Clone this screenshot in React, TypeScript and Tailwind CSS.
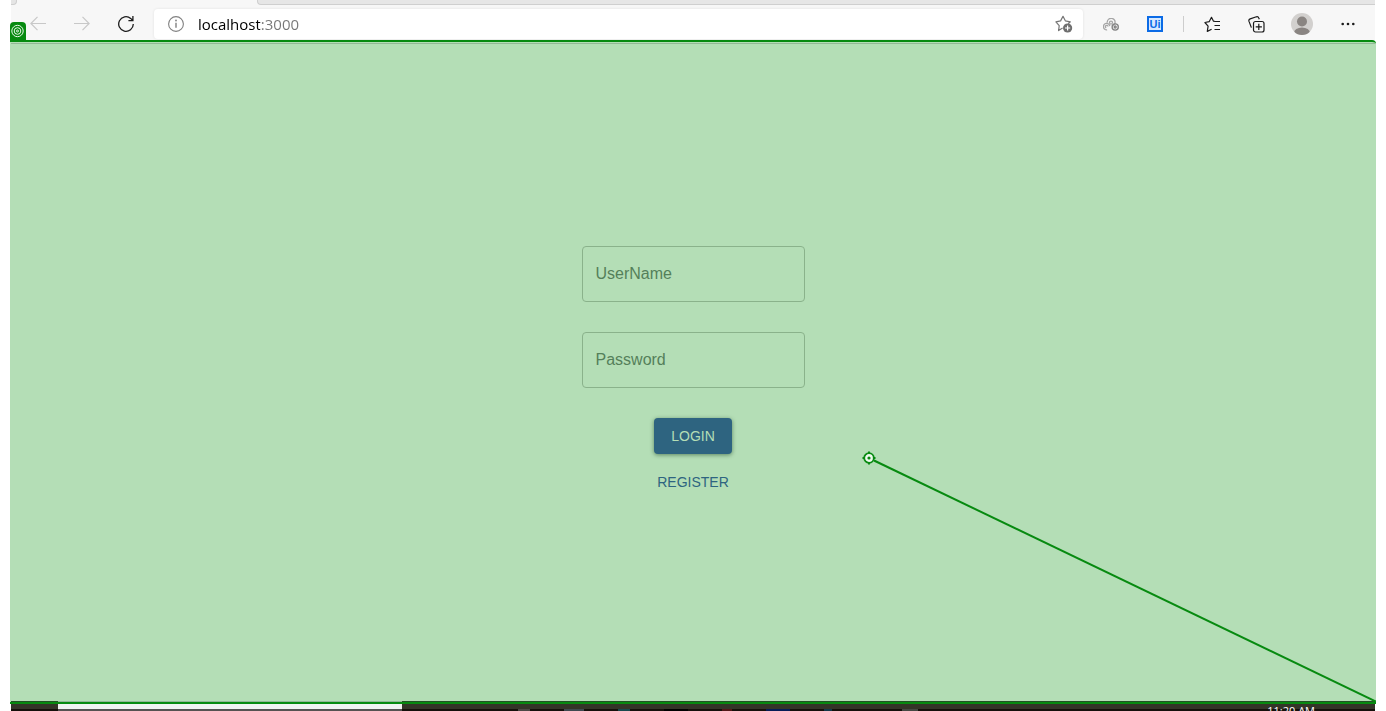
import React, { useState } from "react";

const iconButton = "flex h-7 w-11 shrink-0 items-center justify-center";

function ToolbarButton({ label, children, className = iconButton }: { label: string; children: React.ReactNode; className?: string }) {
  return (
    <button type="button" aria-label={label} className={className}>
      {children}
    </button>
  );
}

function TabStrip() {
  return (
    <div className="flex h-[5px] shrink-0 bg-[#f7f7f7]">
      <div className="w-1.5 rounded-br border-r border-b border-[#cfcfcf] bg-[#e5e5e5]" />
      <div className="w-60" />
      <div className="flex-1 rounded-bl border-b border-l border-[#cfcfcf] bg-[#e6e6e6]" />
    </div>
  );
}

function Toolbar() {
  const [url, setUrl] = useState("localhost:3000");
  return (
    <div className="flex h-[35px] items-center bg-[#f7f7f7] px-[5px] pt-[3px]">
      <ToolbarButton label="Back">
        <svg width="16" height="16" viewBox="0 0 16 16" fill="none" stroke="#c8c8c8" strokeWidth="1.2">
          <path d="M16 7.5H.9M7.5.9L.9 7.5l6.6 6.6" />
        </svg>
      </ToolbarButton>
      <ToolbarButton label="Forward">
        <svg width="16" height="16" viewBox="0 0 16 16" fill="none" stroke="#c8c8c8" strokeWidth="1.2">
          <path d="M0 7.5h15.1M8.5.9l6.6 6.6-6.6 6.6" />
        </svg>
      </ToolbarButton>
      <ToolbarButton label="Refresh">
        <svg width="16" height="16" viewBox="0 0 16 16" fill="none" stroke="#1c1c1c" strokeWidth="1.3">
          <path d="M15.3 8a7.3 7.3 0 1 1-2.6-5.6L15 4.7M14.9 0v4.7h-4.5" />
        </svg>
      </ToolbarButton>
      <div className="ml-1.5 flex h-[30px] flex-1 items-center rounded bg-white px-3.5 shadow-[0_0_3px_rgba(0,0,0,0.09)]">
        <ToolbarButton label="View site information" className="shrink-0">
          <svg width="16" height="16" viewBox="0 0 16 16" fill="none" stroke="#808080">
            <circle cx="8" cy="8" r="7.4" strokeWidth="1.1" />
            <path d="M8 6.7v5" strokeWidth="1.4" />
            <circle cx="8" cy="4.5" r=".9" fill="#808080" stroke="none" />
          </svg>
        </ToolbarButton>
        <input
          aria-label="Address"
          value={url}
          onChange={(e) => setUrl(e.target.value)}
          className="ml-3.5 h-6 min-w-0 flex-1 bg-[linear-gradient(90deg,#000_62px,#767676_62px)] bg-clip-text font-['Open_Sans',sans-serif] text-[15px] leading-6 text-transparent caret-black outline-none"
        />
        <ToolbarButton label="Add this page to favorites" className="-mr-1 shrink-0">
          <svg width="18" height="18" viewBox="0 0 18 18" fill="none" stroke="#757575" strokeWidth="1.2">
            <path d="M7.6 13.1L3.6 15.6l.6-4.9L.9 6.9l4.7-1L8 1.3l2.3 4.5 5 1-2.1 2" strokeLinejoin="round" />
            <circle cx="12.6" cy="13" r="4.6" fill="#6e6e6e" stroke="none" />
            <path d="M12.6 10.4v5.2M10 13h5.2" stroke="#fff" />
          </svg>
        </ToolbarButton>
      </div>
      <ToolbarButton label="Extension" className="ml-1.5 flex h-7 w-11 shrink-0 items-center justify-center">
        <svg width="16" height="13" viewBox="0 0 16 13" fill="none" stroke="#a6a6a6" strokeWidth="1.3">
          <path d="M4.1 11.8A3.2 3.2 0 1 1 6.8 8.2M3.2 9.8a1.3 1.3 0 1 1 1.8-1.2M4.3 4.6a3.9 3.9 0 1 1 7.5 1L9.2 8.4" />
          <circle cx="8" cy="4.6" r="1.5" />
          <circle cx="12.2" cy="9" r="3.1" stroke="#828282" />
          <circle cx="12.2" cy="9" r="1" stroke="#828282" />
        </svg>
      </ToolbarButton>
      <ToolbarButton label="UiPath">
        <span className="flex size-4 items-end justify-center border-2 border-[#0b6be6] bg-[#d6e9ff] font-['Liberation_Sans',sans-serif] text-[11px] leading-[11px] font-bold text-[#0b6be6]">
          Ui
        </span>
      </ToolbarButton>
      <div className="mx-1.5 h-4 w-px bg-[#cdcdcd]" />
      <ToolbarButton label="Favorites">
        <svg width="17" height="17" viewBox="0 0 17 17" fill="none" stroke="#1b1b1b" strokeWidth="1.2">
          <path d="M11.2 5.5L9.5 5.2 7.5 1.3 5.3 5.6l-4.4.9 3.2 3.7-.8 5.2 4.3-2.2M10.5 5.5H16M10.5 9.5H16M10.5 13.5H16" strokeLinejoin="round" />
        </svg>
      </ToolbarButton>
      <ToolbarButton label="Collections">
        <svg width="17" height="17" viewBox="0 0 17 17" fill="none" stroke="#1b1b1b" strokeWidth="1.2">
          <rect x="5.5" y="5.5" width="10.5" height="10.5" rx="2" />
          <path d="M10.8 7.7v6.2M7.7 10.8h6.2M3.4 11.6L1 5.4a2 2 0 0 1 1.2-2.5L8.4.8a2 2 0 0 1 2.4 1.2l.5 1.2" />
        </svg>
      </ToolbarButton>
      <ToolbarButton label="Profile" className="flex h-7 w-12 shrink-0 items-center justify-center">
        <svg width="22" height="22" viewBox="0 0 22 22">
          <clipPath id="avatar"><circle cx="11" cy="11" r="11" /></clipPath>
          <g clipPath="url(#avatar)">
            <rect width="22" height="22" fill="#d2d0ce" />
            <circle cx="11" cy="8.5" r="5" fill="#8a8582" />
            <ellipse cx="11" cy="20" rx="8" ry="5.5" fill="#8a8582" />
          </g>
        </svg>
      </ToolbarButton>
      <ToolbarButton label="Settings and more">
        <svg width="14" height="4" viewBox="0 0 14 4" fill="#1b1b1b">
          <circle cx="1.7" cy="2" r="1.3" /><circle cx="7" cy="2" r="1.3" /><circle cx="12.3" cy="2" r="1.3" />
        </svg>
      </ToolbarButton>
    </div>
  );
}

function Field({ id, label, type }: { id: string; label: string; type: string }) {
  return (
    <div className="grid w-[223px]">
      <input
        id={id}
        type={type}
        placeholder=" "
        className="peer col-start-1 row-start-1 h-14 w-full rounded border border-[#8ab28b] bg-transparent px-3.5 text-base text-[#2f5f35] outline-none"
      />
      <label
        htmlFor={id}
        className="pointer-events-none invisible col-start-1 row-start-1 self-center px-3.5 text-base text-[#54805a] peer-placeholder-shown:visible"
      >
        {label}
      </label>
    </div>
  );
}

function LoginForm() {
  return (
    <form onSubmit={(e) => e.preventDefault()} className="flex flex-col items-center font-['Liberation_Sans',Arial,sans-serif]">
      <div className="flex flex-col gap-[30px]">
        <Field id="username" label="UserName" type="text" />
        <Field id="password" label="Password" type="password" />
      </div>
      <button type="submit" className="mt-[30px] h-9 w-[78px] rounded bg-[#2e6480] text-sm text-[#b4deb6] shadow-[0_1px_4px_rgba(20,60,30,0.55)]">
        LOGIN
      </button>
      <button type="button" className="mt-2.5 h-9 px-2 text-sm text-[#2e6480]">
        REGISTER
      </button>
    </form>
  );
}

function Taskbar() {
  return (
    <div className="mx-px flex h-[7px] shrink-0 overflow-hidden bg-[linear-gradient(#343428_5px,#15100b_5px)]">
      <div className="ml-[47px] w-[344px] bg-[linear-gradient(#f2f2f2_5px,#565252_5px)]" />
      <div className="ml-[116px] flex flex-1 items-end gap-[34px]">
        <span className="h-0.5 w-3 bg-[#4c4845]" />
        <span className="h-0.5 w-5 bg-[#3f4950]" />
        <span className="h-0.5 w-3 bg-[#17494e]" />
        <span className="h-0.5 w-6 bg-black" />
        <span className="h-0.5 w-2.5 bg-[#521717]" />
        <span className="h-0.5 w-6 bg-[#061c57]" />
        <span className="h-0.5 w-2 bg-[#12384a]" />
        <span className="ml-9 h-0.5 w-4 bg-[#454843]" />
      </div>
      <time className="mr-[60px] font-['Open_Sans',sans-serif] text-[11px] leading-[14px] whitespace-nowrap text-white">11:20 AM</time>
    </div>
  );
}

export default function App() {
  return (
    <div className="flex h-screen flex-col overflow-hidden bg-white px-2.5">
      <header className="mx-px">
        <TabStrip />
        <Toolbar />
      </header>
      <main className="relative flex flex-1 flex-col items-center justify-center rounded-tr border-y-2 border-[#078a10] bg-[#b4deb6] pt-px">
        <div className="absolute inset-x-px top-px h-px bg-[#93b796]" />
        <div className="absolute inset-x-px bottom-0 h-px bg-[linear-gradient(90deg,#235226_47px,#93b796_47px,#93b796_391px,#235226_391px)]" />
        <LoginForm />
        <div className="absolute -top-5 left-0 flex h-[18px] w-4 items-center justify-center rounded-t-sm bg-[#078a10]">
          <svg width="14" height="14" viewBox="0 0 14 14" fill="none" stroke="#e8f7e8">
            <circle cx="6.5" cy="7" r="5.7" /><circle cx="6.5" cy="7" r="3.3" /><circle cx="6.5" cy="7" r="1" />
          </svg>
        </div>
        <svg className="absolute right-0 -bottom-0.5" width="514" height="253" viewBox="0 0 514 253" fill="none" stroke="#078a10" strokeWidth="2">
          <path d="M12 9.5L514 250.5" />
          <path d="M7 .5v13M.5 7h13" />
          <circle cx="7" cy="7" r="4.8" fill="#eef9ee" strokeWidth="1.8" />
          <circle cx="7" cy="7" r="1.6" fill="#078a10" stroke="none" />
        </svg>
      </main>
      <Taskbar />
    </div>
  );
}
